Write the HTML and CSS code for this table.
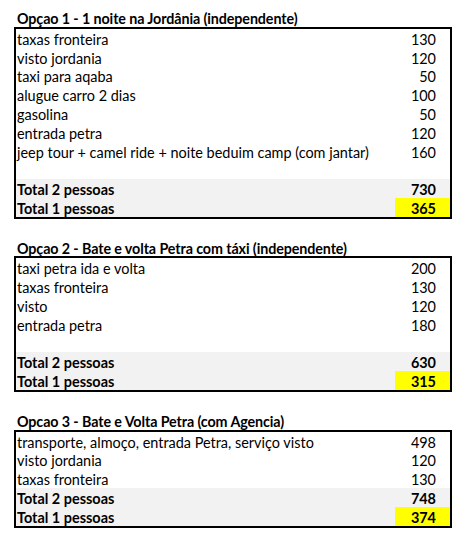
FILE: index.html
```html
<!DOCTYPE html>
<html lang="pt">
<head>
<meta charset="utf-8">
<title>Opções Petra</title>
<link rel="stylesheet" href="styles.css">
</head>
<body>
<div class="sheet">
  <section class="option">
    <h2 class="title">Opçao 1 - 1 noite na Jordânia (independente)</h2>
    <div class="table">
      <div class="row"><span class="label">taxas fronteira</span><span class="value">130</span></div>
      <div class="row"><span class="label">visto jordania</span><span class="value">120</span></div>
      <div class="row"><span class="label">taxi para aqaba</span><span class="value">50</span></div>
      <div class="row"><span class="label">alugue carro 2 dias</span><span class="value">100</span></div>
      <div class="row"><span class="label">gasolina</span><span class="value">50</span></div>
      <div class="row"><span class="label">entrada petra</span><span class="value">120</span></div>
      <div class="row"><span class="label">jeep tour + camel ride + noite beduim camp (com jantar)</span><span class="value">160</span></div>
      <div class="row"></div>
      <div class="row total"><span class="label">Total 2 pessoas</span><span class="value">730</span></div>
      <div class="row total"><span class="label">Total 1 pessoas</span><span class="value hl">365</span></div>
    </div>
  </section>
  <section class="option">
    <h2 class="title">Opçao 2 - Bate e volta Petra com táxi (independente)</h2>
    <div class="table">
      <div class="row"><span class="label">taxi petra ida e volta</span><span class="value">200</span></div>
      <div class="row"><span class="label">taxas fronteira</span><span class="value">130</span></div>
      <div class="row"><span class="label">visto</span><span class="value">120</span></div>
      <div class="row"><span class="label">entrada petra</span><span class="value">180</span></div>
      <div class="row"></div>
      <div class="row total"><span class="label">Total 2 pessoas</span><span class="value">630</span></div>
      <div class="row total"><span class="label">Total 1 pessoas</span><span class="value hl">315</span></div>
    </div>
  </section>
  <section class="option">
    <h2 class="title">Opcao 3 - Bate e Volta Petra (com Agencia)</h2>
    <div class="table">
      <div class="row"><span class="label">transporte, almoço, entrada Petra, serviço visto</span><span class="value">498</span></div>
      <div class="row"><span class="label">visto jordania</span><span class="value">120</span></div>
      <div class="row"><span class="label">taxas fronteira</span><span class="value">130</span></div>
      <div class="row total"><span class="label">Total 2 pessoas</span><span class="value">748</span></div>
      <div class="row total"><span class="label">Total 1 pessoas</span><span class="value hl">374</span></div>
    </div>
  </section>
</div>
</body>
</html>
```
FILE: styles.css
```css
html, body {
  margin: 0;
  padding: 0;
  background: #ffffff;
}
body {
  font-family: Lato, "Liberation Sans", sans-serif;
  font-size: 14.45px;
  color: #000000;
}
.sheet {
  padding: 8px 0 0 14px;
  width: 438px;
  display: flex;
  flex-direction: column;
  gap: 18.8px;
}
.title {
  margin: 0;
  box-sizing: border-box;
  height: 18.8px;
  padding-top: 3px;
  line-height: 15.8px;
  font-size: 14.3px;
  font-weight: 700;
  padding-left: 3px;
  letter-spacing: -0.1px;
  white-space: nowrap;
}
.table {
  border: 2px solid #000000;
}
.row {
  display: grid;
  grid-template-columns: 1fr 55px;
  height: 18.8px;
}
.label,
.value {
  box-sizing: border-box;
  height: 18.8px;
  padding-top: 3px;
  line-height: 15.8px;
  white-space: nowrap;
}
.label {
  padding-left: 1px;
}
.value {
  text-align: right;
  padding-right: 14px;
}
.total {
  background: #f2f2f2;
  font-weight: 700;
}
.hl {
  background: #ffff00;
}
```
